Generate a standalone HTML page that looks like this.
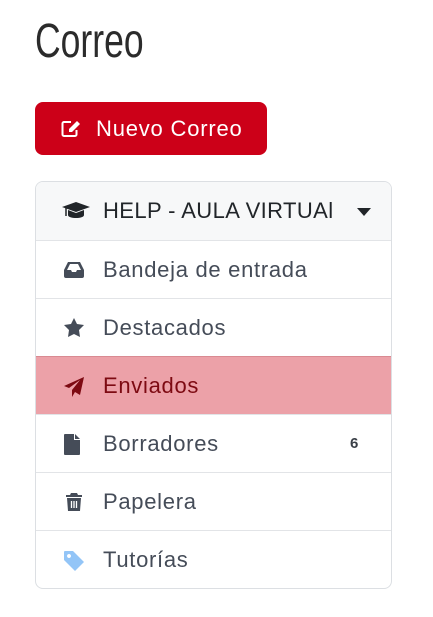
<!DOCTYPE html>
<html><head><meta charset="utf-8"><style>
body{margin:0;background:#fff;font-family:"Liberation Sans",sans-serif;width:433px;height:617px;overflow:hidden;position:relative}
h1{position:absolute;left:35px;top:14px;margin:0;font-weight:400;font-size:48px;color:#2b2b2b;transform:scaleX(.74);transform-origin:left;letter-spacing:0}
.btn{position:absolute;left:35px;top:102px;width:232px;height:53px;background:#cc0018;border-radius:8px;color:#fff;font-size:22px;letter-spacing:.8px;line-height:53px}
.btn span{position:absolute;left:61px}
.btn svg{position:absolute;left:26px;top:18px}
.card{position:absolute;left:35px;top:181px;width:355px;height:406px;border:1px solid #dcdfe3;border-radius:8px;overflow:hidden}
.row{position:absolute;left:0;width:355px;height:58px;border-top:1px solid #e2e4e7;font-size:22px;letter-spacing:.7px;color:#454c58;line-height:58px}
.row .t{position:absolute;left:67px}
.row svg{position:absolute;left:28px;top:20px}
.hd{top:0;border-top:none;background:#f7f8f9;color:#212529;height:58px;letter-spacing:.4px}
.act{background:#eca1a8;color:#7d0a12;border-top-color:#d98a92}
</style></head><body>
<h1>Correo</h1>
<div class="btn"><svg width="20" height="18" viewBox="0 0 20 18"><path d="M10 2H3a1.5 1.5 0 0 0-1.5 1.5v11A1.5 1.5 0 0 0 3 16h11a1.5 1.5 0 0 0 1.5-1.5V10" fill="none" stroke="#fff" stroke-width="2"/><path d="M16 1l3 3-8 8H8V9z" fill="#fff"/></svg><span>Nuevo Correo</span></div>
<div class="card">
<div class="row hd"><svg width="30" height="20" viewBox="0 0 30 20" style="left:25px;top:19px"><path d="M15 1L1 6l14 5 14-5z" fill="#212529"/><path d="M7 9v5c0 2 4 3 8 3s8-1 8-3V9l-8 3z" fill="#212529"/><path d="M5 7v8" stroke="#212529" stroke-width="1.5"/></svg><span class="t">HELP - AULA VIRTUAl</span><svg width="14" height="8" viewBox="0 0 14 8" style="left:321px;top:26px"><path d="M0 0h14L7 8z" fill="#212529"/></svg></div>
<div class="row" style="top:58px"><svg width="20" height="17" viewBox="0 0 20 17"><path d="M4 1h12l4 8v6a2 2 0 0 1-2 2H2a2 2 0 0 1-2-2V9zM3 9h4l1 2h4l1-2h4L14 3H6z" fill="#454c58" fill-rule="evenodd"/></svg><span class="t">Bandeja de entrada</span></div>
<div class="row" style="top:116px"><svg width="20" height="19" viewBox="0 0 20 19" style="top:19px"><path d="M10 0l3 6 7 1-5 5 1 7-6-3-6 3 1-7-5-5 7-1z" fill="#454c58"/></svg><span class="t">Destacados</span></div>
<div class="row act" style="top:174px"><svg width="20" height="20" viewBox="0 0 20 20"><path d="M20 0L0 9l5 2 11-8-8 10v7l3-5 5 3z" fill="#7d0a12"/></svg><span class="t">Enviados</span></div>
<div class="row" style="top:232px"><svg width="16" height="21" viewBox="0 0 16 21" style="top:19px"><path d="M0 1a1 1 0 0 1 1-1h9v6h6v14a1 1 0 0 1-1 1H1a1 1 0 0 1-1-1zM11 0l5 5h-5z" fill="#454c58"/></svg><span class="t">Borradores</span><span style="position:absolute;left:314px;font-size:15px;font-weight:700;color:#3a3f47">6</span></div>
<div class="row" style="top:290px"><svg width="16" height="19" viewBox="0 0 16 19" style="left:30px"><path d="M5 0h6l1 2h4v2H0V2h4zM1 5h14l-1 13H2z" fill="#454c58"/><path d="M5.5 8v7M8 8v7M10.5 8v7" stroke="#fff" stroke-width="1.3"/></svg><span class="t">Papelera</span></div>
<div class="row" style="top:348px"><svg width="20" height="20" viewBox="0 0 20 20"><path d="M0 1a1 1 0 0 1 1-1h8l11 11-9 9L0 9zM5 3a2 2 0 1 0 .01 0z" fill="#93c5f7" fill-rule="evenodd"/></svg><span class="t">Tutorías</span></div>
</div>
</body></html>
